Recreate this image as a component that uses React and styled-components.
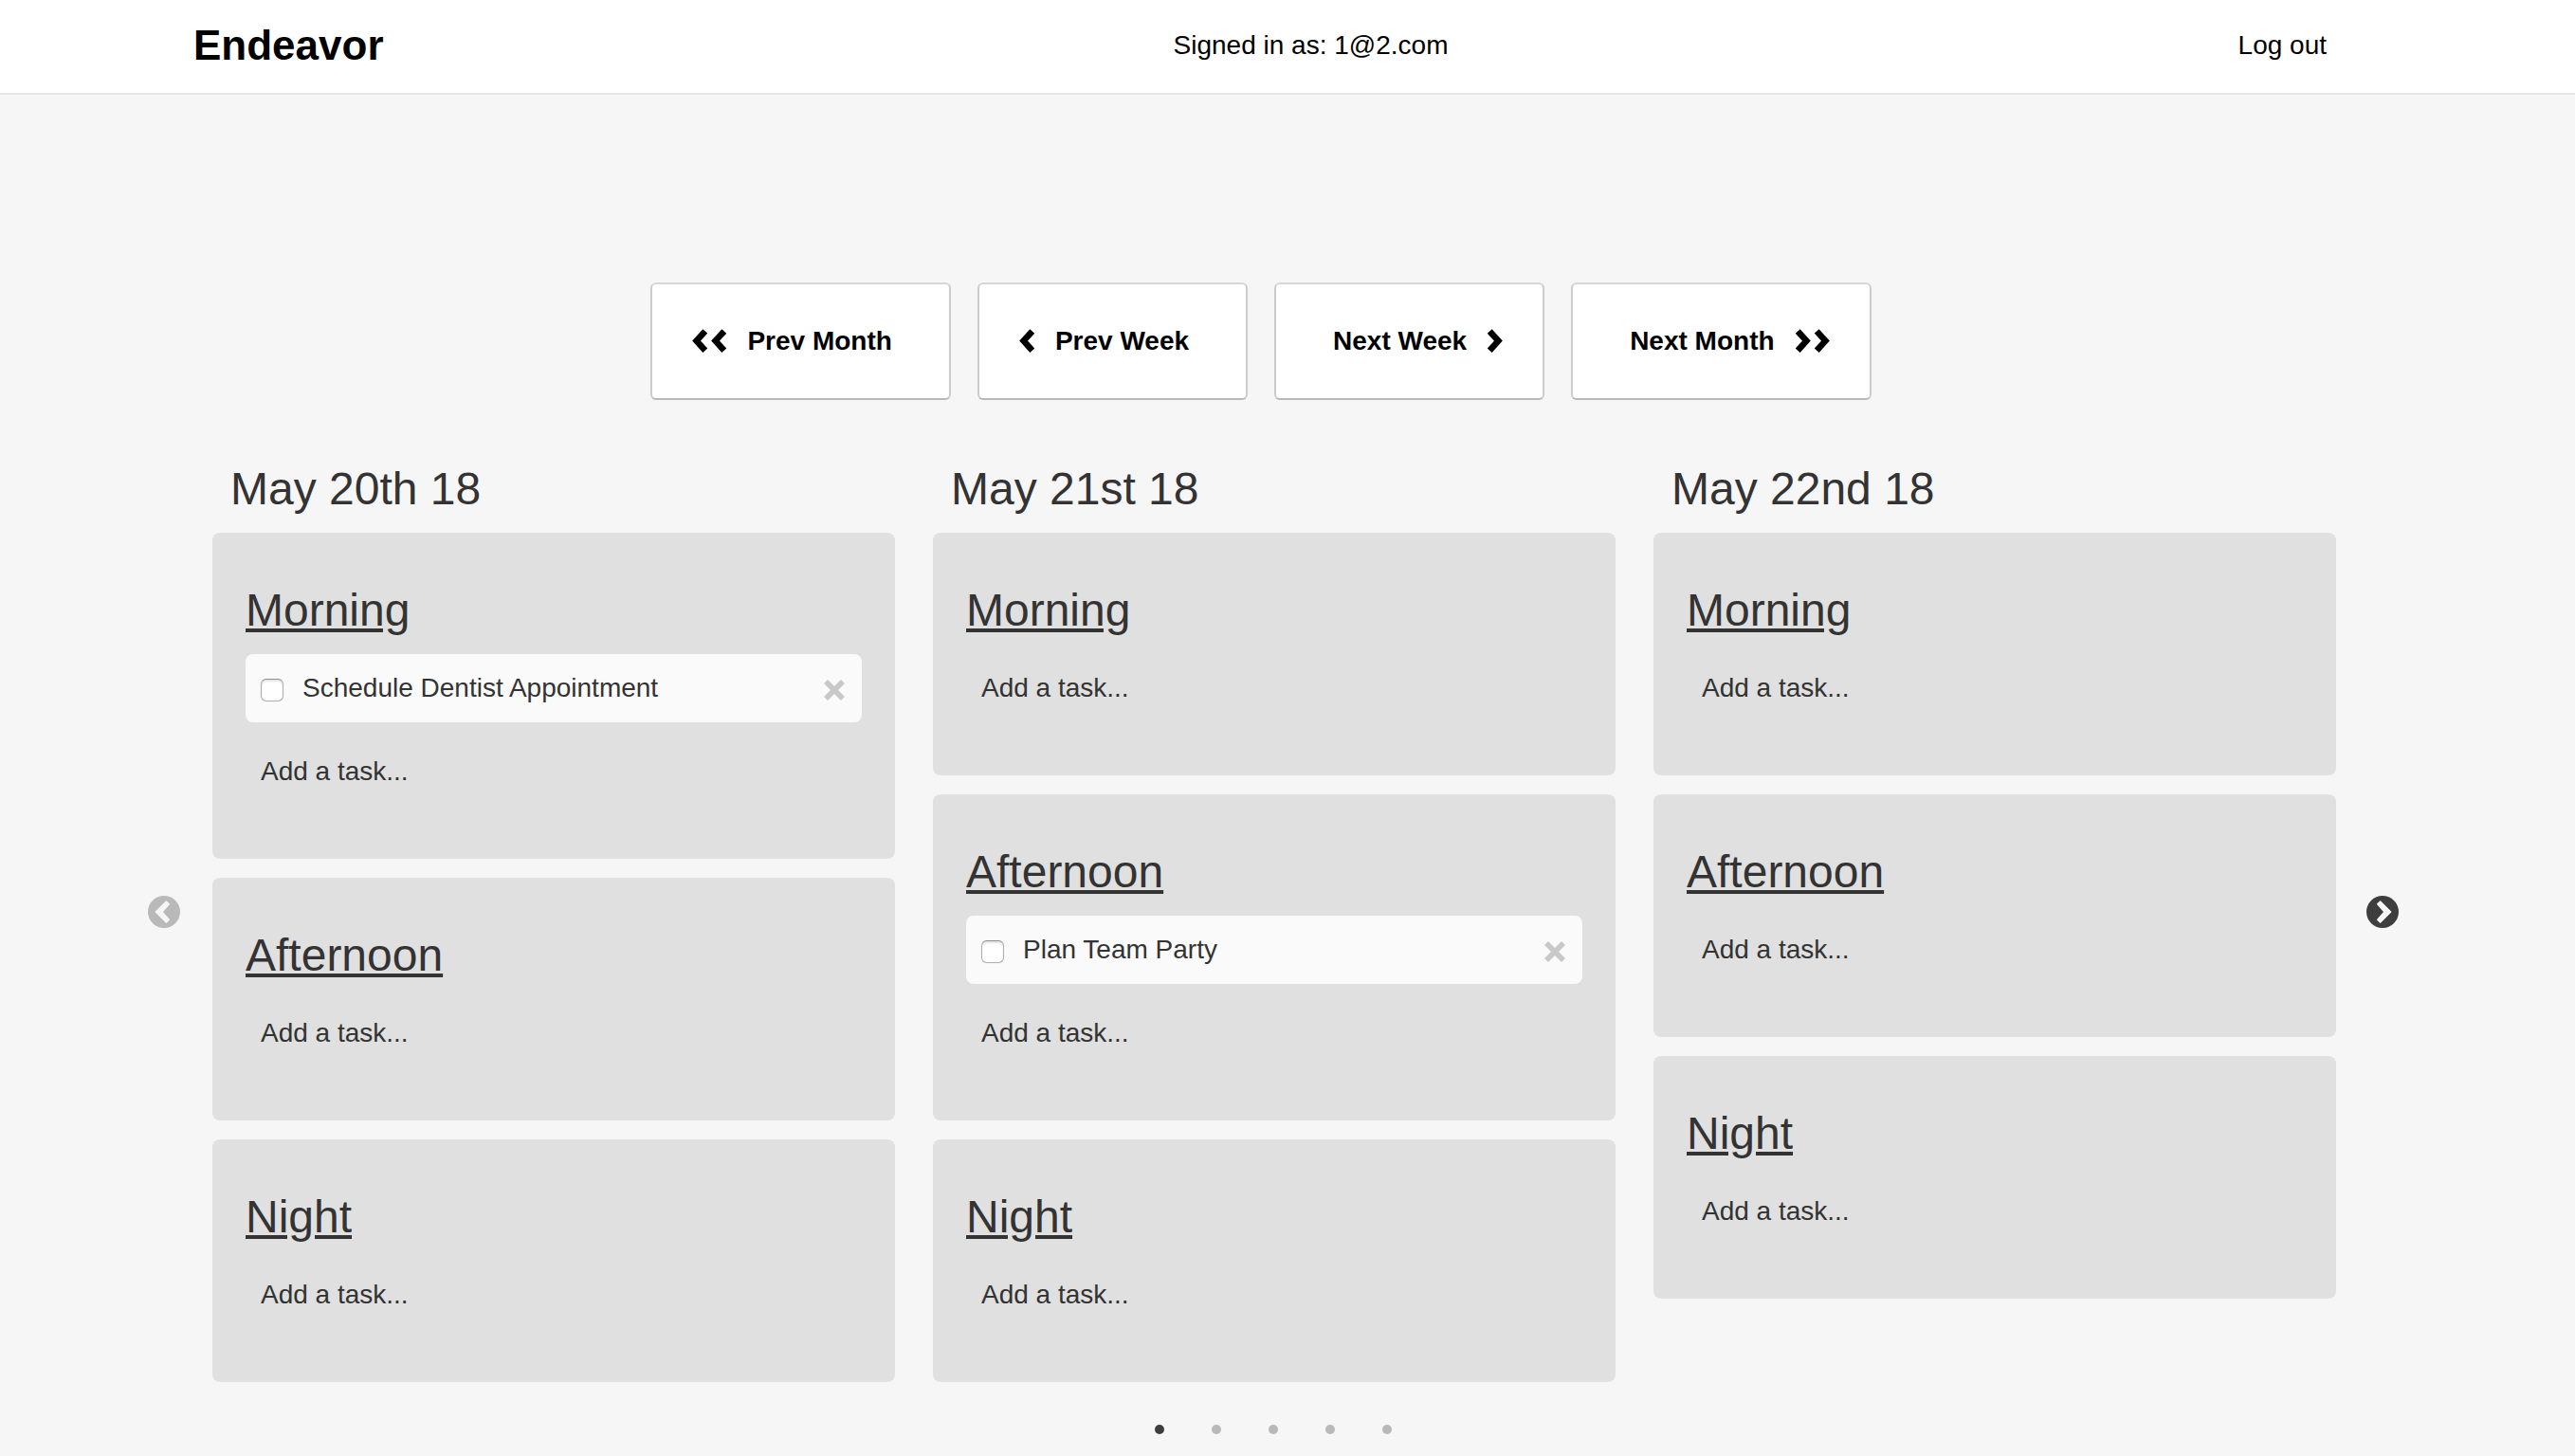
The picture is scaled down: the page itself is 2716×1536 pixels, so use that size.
import React, { useState } from "react";
import styled, { createGlobalStyle } from "styled-components";

const GlobalStyle = createGlobalStyle`
  *, *::before, *::after { box-sizing: border-box; }
  body {
    margin: 0;
    background: #f6f6f6;
    color: #333;
    font-family: "Liberation Sans", Arial, Helvetica, sans-serif;
    font-size: 28px;
    line-height: 40px;
  }
  button, input { font: inherit; color: inherit; }
`;

const Header = styled.header`
  display: flex;
  align-items: center;
  justify-content: space-between;
  padding: 16px 262px 18px 204px;
  background: #fff;
  border-bottom: 2px solid #e7e7e7;
  color: #000;
`;

const Brand = styled.a`
  font-size: 44px;
  font-weight: bold;
  line-height: 64px;
  color: inherit;
  text-decoration: none;
`;

const LogOut = styled.a`
  color: inherit;
  text-decoration: none;
`;

const Main = styled.main`
  padding: 198px 186px 8px 156px;
`;

const Pager = styled.nav`
  display: flex;
  justify-content: center;
  gap: 28px;
  padding-right: 26px;
`;

const PagerButton = styled.button`
  display: flex;
  flex-direction: ${(p) => (p.$forward ? "row-reverse" : "row")};
  align-items: center;
  gap: 22px;
  padding: ${(p) => (p.$forward ? "40px 42px 40px 60px" : "40px 60px 40px 42px")};
  background: #fff;
  border: 2px solid #ccc;
  border-top-color: #d6d6d6;
  border-bottom-color: #b8b8b8;
  border-radius: 6px;
  color: #000;
  font-weight: bold;
  white-space: nowrap;
  cursor: pointer;
`;

const Carousel = styled.section`
  display: grid;
  grid-template-columns: 34px 1fr 34px;
  align-items: center;
  margin-top: 44px;
`;

const Arrow = styled.button`
  display: block;
  padding: 0;
  border: 0;
  background: none;
  color: ${(p) => (p.disabled ? "#b9b9b9" : "#3e3e3e")};
  cursor: ${(p) => (p.disabled ? "default" : "pointer")};

  svg { display: block; }
`;

const Days = styled.div`
  display: grid;
  grid-template-columns: repeat(3, 1fr);
  align-items: start;
  gap: 40px;
  padding: 0 32px 0 34px;
`;

const Day = styled.article`
  display: flex;
  flex-direction: column;
  gap: 20px;
`;

const DayTitle = styled.h2`
  margin: 0;
  padding: 24px 19px 0;
  font-size: 48px;
  font-weight: normal;
  line-height: 52px;
`;

const Period = styled.section`
  display: flex;
  flex-direction: column;
  gap: 16px;
  padding: 52px 35px 56px;
  background: #e0e0e0;
  border-radius: 8px;
`;

const PeriodTitle = styled.h3`
  margin: 0;
  font-size: 48px;
  font-weight: normal;
  line-height: 60px;
  text-decoration: underline;
`;

const Task = styled.div`
  display: flex;
  align-items: center;
  padding: 16px 18px 16px 16px;
  background: #fafafa;
  border-radius: 8px;
`;

const TaskLabel = styled.label`
  display: flex;
  flex: 1;
  align-items: center;
  gap: 20px;
`;

const Checkbox = styled.input`
  appearance: none;
  width: 24px;
  height: 24px;
  margin: 4px 0 0;
  background: #fff;
  border: 1px solid #b0b0b0;
  border-top-color: #909090;
  border-radius: 6px;
  box-shadow: inset 0 2px 2px #e4e4e4, 0 0 1px #c8c8c8;

  &:checked { background: #3e3e3e; }
`;

const RemoveButton = styled.button`
  padding: 4px 0 0;
  border: 0;
  background: none;
  color: #c8c8c8;
  cursor: pointer;

  svg { display: block; }
`;

const AddTask = styled.input`
  width: 100%;
  height: 72px;
  padding: 16px;
  border: 0;
  border-radius: 8px;
  background: transparent;

  &::placeholder { color: #333; opacity: 1; }
`;

const Dots = styled.div`
  display: flex;
  justify-content: center;
  gap: 20px;
  padding-top: 30px;
`;

const Dot = styled.button`
  display: grid;
  place-items: center;
  width: 40px;
  height: 40px;
  padding: 0;
  border: 0;
  background: none;
  cursor: pointer;

  &::before {
    content: "";
    width: 10px;
    height: 10px;
    border-radius: 50%;
    background: ${(p) => (p.$active ? "#3e3e3e" : "#b9b9b9")};
  }
`;

function Chevrons({ count = 1, forward = false }) {
  const width = count * 20 - 4;
  return (
    <svg width={width} height="26" viewBox={`0 0 ${width} 26`} aria-hidden="true">
      <g
        transform={forward ? `translate(${width} 0) scale(-1 1)` : undefined}
        fill="none"
        stroke="currentColor"
        strokeWidth="6.6"
      >
        {Array.from({ length: count }, (_, i) => (
          <path key={i} d="M13.8 2.4 4.6 12.6 13.8 22.8" transform={`translate(${i * 20} 0)`} />
        ))}
      </g>
    </svg>
  );
}

function CircleChevron({ forward = false }) {
  return (
    <svg width="34" height="34" viewBox="0 0 34 34" aria-hidden="true">
      <circle cx="17" cy="17" r="17" fill="currentColor" />
      <path
        d="M8.4 17 19.4 6 22.2 8.8 15 17 22.2 25.2 19.4 28Z"
        transform={forward ? "translate(34 0) scale(-1 1)" : undefined}
        fill="#f6f6f6"
        stroke="#f6f6f6"
        strokeWidth="1.6"
        strokeLinejoin="round"
      />
    </svg>
  );
}

function Cross() {
  return (
    <svg width="22" height="22" viewBox="0 0 22 22" aria-hidden="true">
      <path d="M2 2 20 20M20 2 2 20" stroke="currentColor" strokeWidth="5.6" />
    </svg>
  );
}

const PERIODS = ["Morning", "Afternoon", "Night"];

const DAYS = [
  { date: "May 20th 18", tasks: { Morning: ["Schedule Dentist Appointment"] } },
  { date: "May 21st 18", tasks: { Afternoon: ["Plan Team Party"] } },
  { date: "May 22nd 18", tasks: {} },
];

function TaskRow({ name }) {
  return (
    <Task>
      <TaskLabel>
        <Checkbox type="checkbox" />
        {name}
      </TaskLabel>
      <RemoveButton type="button" aria-label={`Remove ${name}`}>
        <Cross />
      </RemoveButton>
    </Task>
  );
}

export default function App() {
  const [page, setPage] = useState(0);
  return (
    <>
      <GlobalStyle />
      <Header>
        <Brand href="#">Endeavor</Brand>
        <span>Signed in as: 1@2.com</span>
        <LogOut href="#">Log out</LogOut>
      </Header>
      <Main>
        <Pager aria-label="Dates">
          <PagerButton type="button"><Chevrons count={2} />Prev Month</PagerButton>
          <PagerButton type="button"><Chevrons />Prev Week</PagerButton>
          <PagerButton type="button" $forward><Chevrons forward />Next Week</PagerButton>
          <PagerButton type="button" $forward><Chevrons count={2} forward />Next Month</PagerButton>
        </Pager>
        <Carousel>
          <Arrow type="button" aria-label="Previous" disabled={page === 0} onClick={() => setPage(page - 1)}>
            <CircleChevron />
          </Arrow>
          <Days>
            {DAYS.map(({ date, tasks }) => (
              <Day key={date}>
                <DayTitle>{date}</DayTitle>
                {PERIODS.map((period) => (
                  <Period key={period}>
                    <PeriodTitle>{period}</PeriodTitle>
                    {(tasks[period] || []).map((name) => (
                      <TaskRow key={name} name={name} />
                    ))}
                    <AddTask placeholder="Add a task..." aria-label={`Add a task, ${date} ${period}`} />
                  </Period>
                ))}
              </Day>
            ))}
          </Days>
          <Arrow type="button" aria-label="Next" disabled={page === 4} onClick={() => setPage(page + 1)}>
            <CircleChevron forward />
          </Arrow>
        </Carousel>
        <Dots>
          {[0, 1, 2, 3, 4].map((i) => (
            <Dot key={i} type="button" aria-label={`Page ${i + 1}`} $active={i === page} onClick={() => setPage(i)} />
          ))}
        </Dots>
      </Main>
    </>
  );
}
